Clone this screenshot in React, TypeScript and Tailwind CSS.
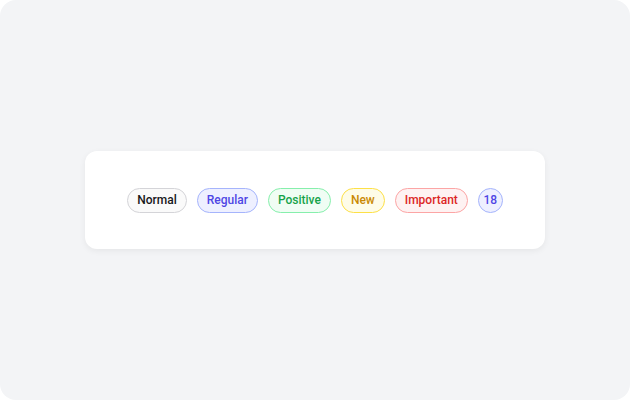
import React from "react";

const badges = [
  { label: "Normal", cls: "border-[#d4d4d8] bg-[#fafafa] text-[#18181b]" },
  { label: "Regular", cls: "border-[#a5b4fc] bg-[#eef0ff] text-[#4f46e5]" },
  { label: "Positive", cls: "border-[#86efac] bg-[#f0fdf4] text-[#16a34a]" },
  { label: "New", cls: "border-[#fde047] bg-[#fefce8] text-[#ca8a04]" },
  { label: "Important", cls: "border-[#fca5a5] bg-[#fef2f2] text-[#dc2626]" },
];

export default function App() {
  return (
    <div className="w-[630px] h-[400px] bg-white">
      <div
        className="w-full h-full rounded-2xl bg-[#f3f4f6] flex items-center justify-center"
        style={{ fontFamily: "Roboto, 'Noto Sans', sans-serif" }}
      >
        <div className="w-[460px] h-[98px] bg-white rounded-xl shadow-[0_2px_6px_rgba(0,0,0,0.06)] flex items-center justify-center gap-[10px]">
          {badges.map((b) => (
            <span
              key={b.label}
              className={`h-[25px] px-[9px] rounded-full border flex items-center text-[12px] font-medium ${b.cls}`}
            >
              {b.label}
            </span>
          ))}
          <span className="h-[25px] w-[25px] rounded-full border border-[#a5b4fc] bg-[#eef0ff] text-[#4f46e5] flex items-center justify-center text-[12px] font-medium">
            18
          </span>
        </div>
      </div>
    </div>
  );
}
